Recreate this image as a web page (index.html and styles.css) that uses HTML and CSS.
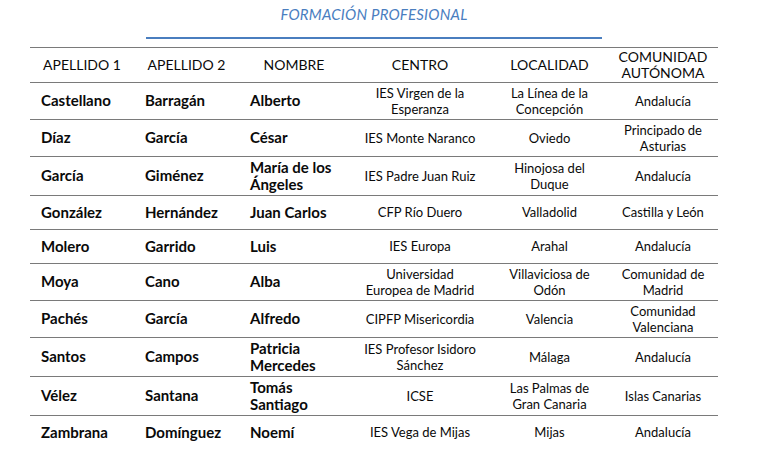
FILE: index.html
```html
<!DOCTYPE html>
<html lang="es">
<head>
<meta charset="utf-8">
<title>Formación Profesional</title>
<link rel="stylesheet" href="styles.css">
</head>
<body>
<main class="page">
  <h1 class="title">FORMACIÓN PROFESIONAL</h1>
  <div class="rule"></div>
  <table class="roster">
    <colgroup>
      <col class="c-ap1"><col class="c-ap2"><col class="c-nom"><col class="c-cen"><col class="c-loc"><col class="c-com">
    </colgroup>
    <thead>
      <tr>
        <th>APELLIDO 1</th>
        <th>APELLIDO 2</th>
        <th>NOMBRE</th>
        <th>CENTRO</th>
        <th>LOCALIDAD</th>
        <th>COMUNIDAD<br>AUTÓNOMA</th>
      </tr>
    </thead>
    <tbody>
      <tr><td class="name">Castellano</td><td class="name">Barragán</td><td class="name">Alberto</td><td>IES Virgen de la<br>Esperanza</td><td>La Línea de la<br>Concepción</td><td>Andalucía</td></tr>
      <tr><td class="name">Díaz</td><td class="name">García</td><td class="name">César</td><td>IES Monte Naranco</td><td>Oviedo</td><td>Principado de<br>Asturias</td></tr>
      <tr><td class="name">García</td><td class="name">Giménez</td><td class="name">María de los<br>Ángeles</td><td>IES Padre Juan Ruiz</td><td>Hinojosa del<br>Duque</td><td>Andalucía</td></tr>
      <tr><td class="name">González</td><td class="name">Hernández</td><td class="name">Juan Carlos</td><td>CFP Río Duero</td><td>Valladolid</td><td>Castilla y León</td></tr>
      <tr><td class="name">Molero</td><td class="name">Garrido</td><td class="name">Luis</td><td>IES Europa</td><td>Arahal</td><td>Andalucía</td></tr>
      <tr><td class="name">Moya</td><td class="name">Cano</td><td class="name">Alba</td><td>Universidad<br>Europea de Madrid</td><td>Villaviciosa de<br>Odón</td><td>Comunidad de<br>Madrid</td></tr>
      <tr><td class="name">Pachés</td><td class="name">García</td><td class="name">Alfredo</td><td>CIPFP Misericordia</td><td>Valencia</td><td>Comunidad<br>Valenciana</td></tr>
      <tr><td class="name">Santos</td><td class="name">Campos</td><td class="name">Patricia<br>Mercedes</td><td>IES Profesor Isidoro<br>Sánchez</td><td>Málaga</td><td>Andalucía</td></tr>
      <tr><td class="name">Vélez</td><td class="name">Santana</td><td class="name">Tomás<br>Santiago</td><td>ICSE</td><td>Las Palmas de<br>Gran Canaria</td><td>Islas Canarias</td></tr>
      <tr><td class="name">Zambrana</td><td class="name">Domínguez</td><td class="name">Noemí</td><td>IES Vega de Mijas</td><td>Mijas</td><td>Andalucía</td></tr>
    </tbody>
  </table>
</main>
</body>
</html>
```

FILE: styles.css
```css
html, body {
  margin: 0;
  padding: 0;
  background: #ffffff;
}

body {
  font-family: Lato, "Open Sans", "Liberation Sans", sans-serif;
  color: #0a0a0a;
}

.page {
  width: 688px;
  margin-left: 30px;
  display: flex;
  flex-direction: column;
  align-items: center;
}

.title {
  margin: 4px 0 0;
  font-size: 15px;
  line-height: 20px;
  font-weight: 400;
  font-style: italic;
  color: #4a7ebf;
  letter-spacing: 0.2px;
}

.rule {
  width: 456px;
  height: 1.5px;
  margin-top: 13px;
  background: #4a7ebf;
}

.roster {
  width: 688px;
  margin-top: 8px;
  border-collapse: collapse;
  table-layout: fixed;
  border-top: 1px solid #7a7a7a;
}

.c-ap1 { width: 104px; }
.c-ap2 { width: 105px; }
.c-nom { width: 110px; }
.c-cen { width: 142px; }
.c-loc { width: 117px; }
.c-com { width: 110px; }

.roster tr {
  height: 34px;
  border-bottom: 1px solid #7a7a7a;
}

.roster th {
  font-size: 14px;
  line-height: 16px;
  font-weight: 400;
  text-align: center;
  vertical-align: middle;
  padding: 1px 0;
  white-space: nowrap;
  color: #0a0a0a;
}

.roster td {
  font-size: 13px;
  line-height: 16px;
  text-align: center;
  vertical-align: middle;
  padding: 2px 0;
  white-space: nowrap;
}

.roster td.name {
  text-align: left;
  padding-left: 11px;
  font-size: 15px;
  line-height: 17px;
  font-weight: 700;
}
```
